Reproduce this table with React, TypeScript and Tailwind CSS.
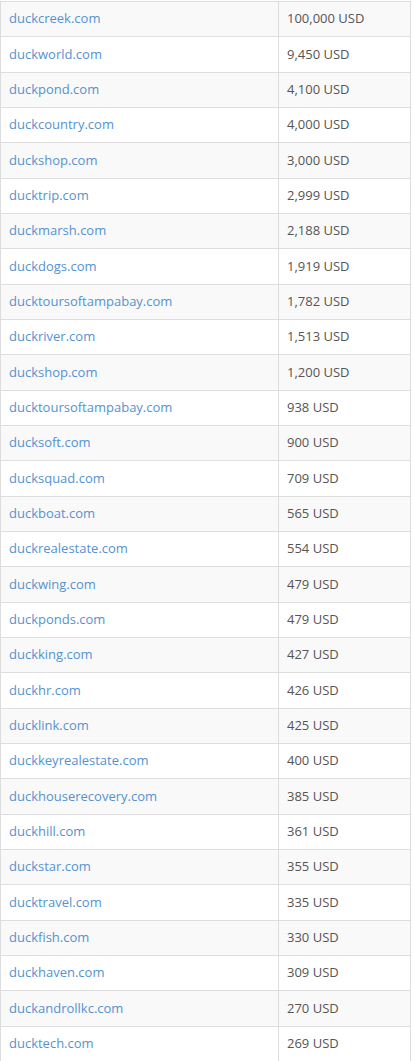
import React from "react";

const rows: [string, string][] = [
  ["duckcreek.com", "100,000 USD"],
  ["duckworld.com", "9,450 USD"],
  ["duckpond.com", "4,100 USD"],
  ["duckcountry.com", "4,000 USD"],
  ["duckshop.com", "3,000 USD"],
  ["ducktrip.com", "2,999 USD"],
  ["duckmarsh.com", "2,188 USD"],
  ["duckdogs.com", "1,919 USD"],
  ["ducktoursoftampabay.com", "1,782 USD"],
  ["duckriver.com", "1,513 USD"],
  ["duckshop.com", "1,200 USD"],
  ["ducktoursoftampabay.com", "938 USD"],
  ["ducksoft.com", "900 USD"],
  ["ducksquad.com", "709 USD"],
  ["duckboat.com", "565 USD"],
  ["duckrealestate.com", "554 USD"],
  ["duckwing.com", "479 USD"],
  ["duckponds.com", "479 USD"],
  ["duckking.com", "427 USD"],
  ["duckhr.com", "426 USD"],
  ["ducklink.com", "425 USD"],
  ["duckkeyrealestate.com", "400 USD"],
  ["duckhouserecovery.com", "385 USD"],
  ["duckhill.com", "361 USD"],
  ["duckstar.com", "355 USD"],
  ["ducktravel.com", "335 USD"],
  ["duckfish.com", "330 USD"],
  ["duckhaven.com", "309 USD"],
  ["duckandrollkc.com", "270 USD"],
  ["ducktech.com", "269 USD"],
];

export default function App() {
  return (
    <div
      className="w-[415px] h-[1061px] overflow-hidden bg-white pt-px"
      style={{ fontFamily: '"Open Sans", sans-serif' }}
    >
      <div className="w-[411px] border-l border-r border-t border-[#dddddd] text-[13px]">
        {rows.map(([d, v], i) => (
          <div
            key={i}
            className={`flex h-[35.34px] border-b border-[#dddddd] ${i % 2 === 0 ? "bg-[#f9f9f9]" : "bg-white"}`}
          >
            <div className="w-[278px] border-r border-[#dddddd] pl-[8px] flex items-center text-[#5592d0]">
              {d}
            </div>
            <div className="flex-1 pl-[8px] flex items-center text-[#555555]">{v}</div>
          </div>
        ))}
      </div>
    </div>
  );
}
